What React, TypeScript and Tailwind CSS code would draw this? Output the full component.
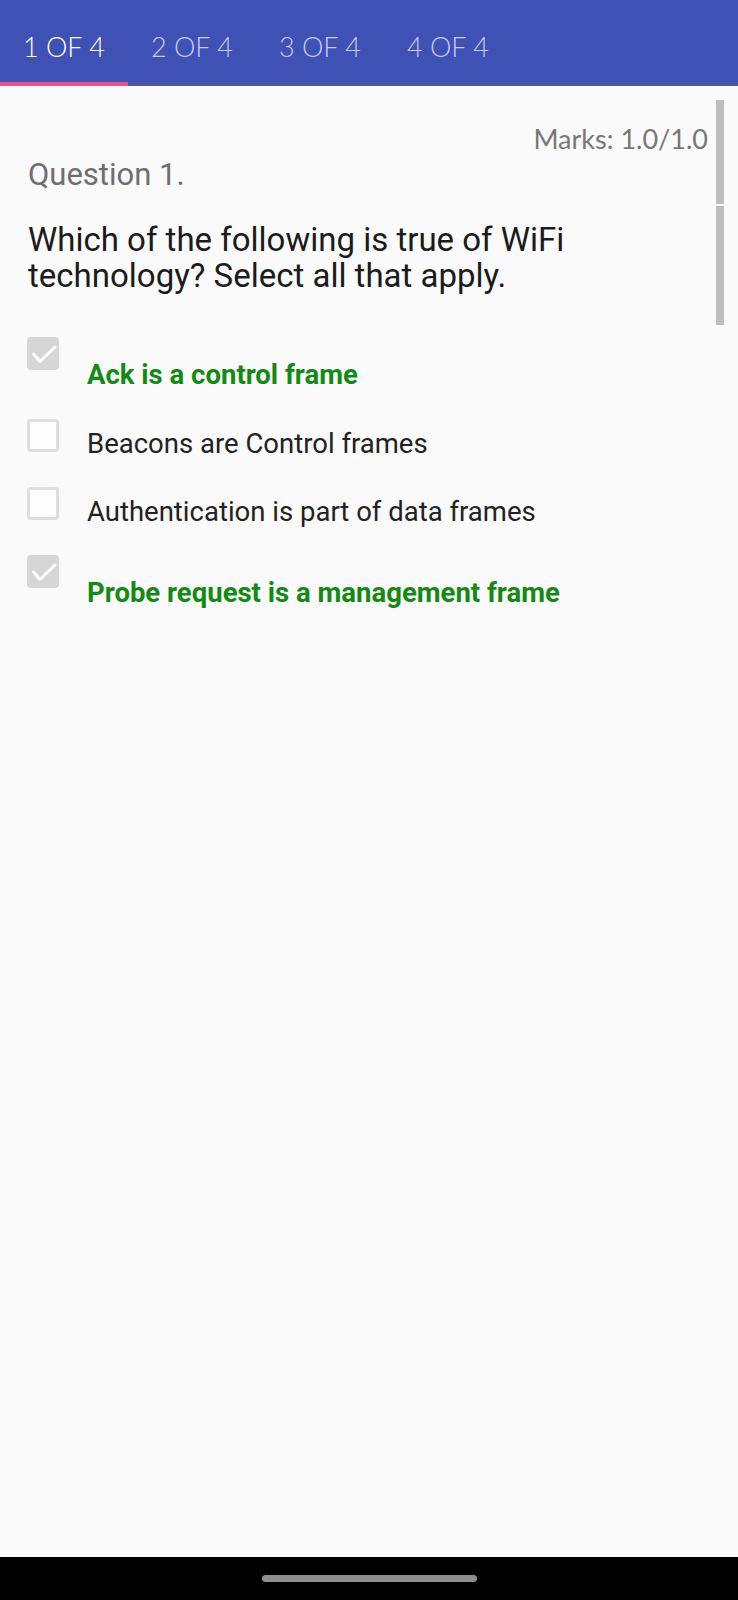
import React from 'react'

const tabs = ['1 OF 4', '2 OF 4', '3 OF 4', '4 OF 4']

const options = [
    { text: 'Ack is a control frame', checked: true },
    { text: 'Beacons are Control frames', checked: false },
    { text: 'Authentication is part of data frames', checked: false },
    { text: 'Probe request is a management frame', checked: true },
]

function CheckBox({ checked }: { checked: boolean }) {
    if (checked) {
        return (
            <div className="w-[32px] h-[33px] shrink-0 rounded-[4px] bg-[#d6d6d6] flex items-center justify-center">
                <svg width="32" height="33" viewBox="0 0 32 33" fill="none">
                    <path d="M6.5 17 L13 24.5 L28 10" stroke="#ffffff" strokeWidth="3" strokeLinecap="round" strokeLinejoin="round" />
                </svg>
            </div>
        )
    }
    return <div className="w-[32px] h-[33px] shrink-0 rounded-[4px] border-[3px] border-[#dedede] bg-[#fdfdfd]"></div>
}

export default function App() {
    return (
        <div className="w-[738px] h-[1600px] bg-[#fafafa] flex flex-col font-['Roboto',sans-serif]">
            <div className="h-[82px] bg-[#3f51b5] flex">
                {tabs.map((t, i) => (
                    <div
                        key={t}
                        className={`w-[128px] text-center pt-[33px] leading-none text-[27px] font-light font-['Lato',sans-serif] ${i === 0 ? 'text-white' : 'text-[#c9cdf0]'}`}
                    >
                        {t}
                    </div>
                ))}
            </div>
            <div className="h-[4px] flex bg-[#4a52a3]">
                <div className="w-[128px] bg-[#e9508d]"></div>
            </div>

            <div className="flex-1 relative">
                {/* scrollbar */}
                <div className="absolute right-[14px] top-[14px] w-[8px] flex flex-col gap-[2px]">
                    <div className="h-[104px] bg-[#bdbdbd]"></div>
                    <div className="h-[119px] bg-[#bdbdbd]"></div>
                </div>

                <div className="mt-[39px] pr-[30px] text-right leading-none text-[27px] text-[#777777] font-['Lato',sans-serif]">
                    Marks: 1.0/1.0
                </div>

                <div className="mt-[7px] pl-[28px] leading-none text-[31px] text-[#6e6e6e]">
                    Question 1.
                </div>

                <div className="mt-[32px] pl-[28px] pr-[30px] leading-[36px] text-[33px] text-[#1b1b1b]">
                    Which of the following is true of WiFi technology? Select all that apply.
                </div>

                <div className="mt-[43px] flex flex-col">
                    {options.map((o) => (
                        <div key={o.text} className={`flex pl-[27px] ${o.checked ? 'h-[82px]' : 'h-[68px]'}`}>
                            <CheckBox checked={o.checked} />
                            <div
                                className={`ml-[28px] text-[27.5px] leading-[32px] ${
                                    o.checked ? 'pt-[22px] font-bold text-[#138a13]' : 'pt-[9px] text-[#222222]'
                                }`}
                            >
                                {o.text}
                            </div>
                        </div>
                    ))}
                </div>
            </div>

            <div className="h-[43px] bg-black flex justify-center pt-[18px]">
                <div className="w-[215px] h-[7px] rounded-full bg-[#8e8e8e]"></div>
            </div>
        </div>
    )
}
